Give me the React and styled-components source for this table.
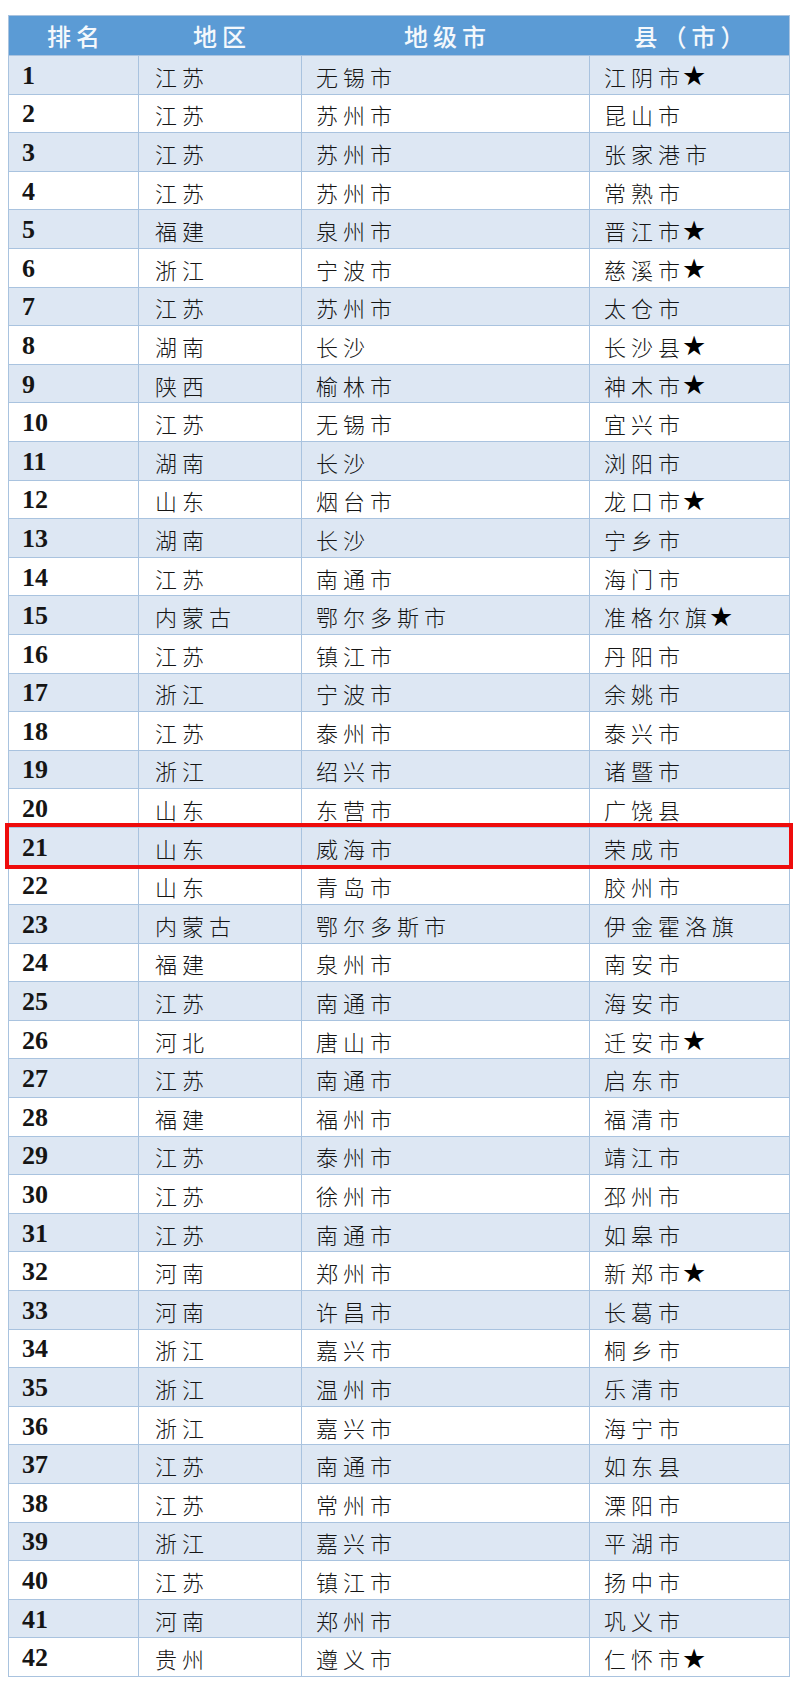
import React from "react";
import styled, { createGlobalStyle } from "styled-components";

const GlobalStyle = createGlobalStyle`
  html, body {
    margin: 0;
    padding: 0;
    background: #ffffff;
  }
`;

const rows = [
  ["江苏", "无锡市", "江阴市", true],
  ["江苏", "苏州市", "昆山市"],
  ["江苏", "苏州市", "张家港市"],
  ["江苏", "苏州市", "常熟市"],
  ["福建", "泉州市", "晋江市", true],
  ["浙江", "宁波市", "慈溪市", true],
  ["江苏", "苏州市", "太仓市"],
  ["湖南", "长沙", "长沙县", true],
  ["陕西", "榆林市", "神木市", true],
  ["江苏", "无锡市", "宜兴市"],
  ["湖南", "长沙", "浏阳市"],
  ["山东", "烟台市", "龙口市", true],
  ["湖南", "长沙", "宁乡市"],
  ["江苏", "南通市", "海门市"],
  ["内蒙古", "鄂尔多斯市", "准格尔旗", true],
  ["江苏", "镇江市", "丹阳市"],
  ["浙江", "宁波市", "余姚市"],
  ["江苏", "泰州市", "泰兴市"],
  ["浙江", "绍兴市", "诸暨市"],
  ["山东", "东营市", "广饶县"],
  ["山东", "威海市", "荣成市"],
  ["山东", "青岛市", "胶州市"],
  ["内蒙古", "鄂尔多斯市", "伊金霍洛旗"],
  ["福建", "泉州市", "南安市"],
  ["江苏", "南通市", "海安市"],
  ["河北", "唐山市", "迁安市", true],
  ["江苏", "南通市", "启东市"],
  ["福建", "福州市", "福清市"],
  ["江苏", "泰州市", "靖江市"],
  ["江苏", "徐州市", "邳州市"],
  ["江苏", "南通市", "如皋市"],
  ["河南", "郑州市", "新郑市", true],
  ["河南", "许昌市", "长葛市"],
  ["浙江", "嘉兴市", "桐乡市"],
  ["浙江", "温州市", "乐清市"],
  ["浙江", "嘉兴市", "海宁市"],
  ["江苏", "南通市", "如东县"],
  ["江苏", "常州市", "溧阳市"],
  ["浙江", "嘉兴市", "平湖市"],
  ["江苏", "镇江市", "扬中市"],
  ["河南", "郑州市", "巩义市"],
  ["贵州", "遵义市", "仁怀市", true],
];

const HIGHLIGHT = 21;

const Page = styled.div`
  padding: 15px 10px 8px 8px;
`;

const Table = styled.div`
  width: 782px;
  border: 1px solid #a9c3df;
  box-sizing: border-box;
`;

const cols = "129px 163px 288px 1fr";

const HeadRow = styled.div`
  display: grid;
  grid-template-columns: ${cols};
  height: 39px;
  background: #5b9bd5;
  color: #f4f8fc;
  font-family: "Noto Sans CJK SC", sans-serif;
  font-size: 24px;
  font-weight: 500;
  letter-spacing: 5px;
`;

const HeadCell = styled.div`
  display: flex;
  align-items: center;
  justify-content: center;
  padding-left: 5px;
`;

const Row = styled.div`
  display: grid;
  grid-template-columns: ${cols};
  height: 38.6px;
  box-sizing: border-box;
  background: ${({ $odd }) => ($odd ? "#dde7f3" : "#ffffff")};
  border-top: 1px solid #a9c3df;
  position: relative;
  ${({ $mark }) =>
    $mark &&
    `
    outline: 4px solid #ee0c0c;
    outline-offset: 0px;
    z-index: 1;
  `}
`;

const Cell = styled.div`
  display: flex;
  align-items: center;
  padding-left: ${({ $pad }) => $pad || 16}px;
  padding-top: 2px;
  border-left: ${({ $first }) => ($first ? "none" : "1px solid #a9c3df")};
  color: #151515;
  font-family: "Noto Sans CJK SC", sans-serif;
  font-size: 22px;
  font-weight: 300;
  letter-spacing: 5px;
  white-space: nowrap;
`;

const Rank = styled(Cell)`
  font-family: "Liberation Serif", "Times New Roman", serif;
  font-weight: 700;
  font-size: 26px;
  letter-spacing: 0;
  padding-left: 13px;
`;

const Star = styled.span`
  font-family: "DejaVu Sans", sans-serif;
  font-size: 27px;
  color: #000;
  margin-left: -3px;
`;

export default function App() {
  return (
    <Page>
      <GlobalStyle />
      <Table>
        <HeadRow>
          <HeadCell>排名</HeadCell>
          <HeadCell>地区</HeadCell>
          <HeadCell>地级市</HeadCell>
          <HeadCell>县（市）</HeadCell>
        </HeadRow>
        {rows.map(([region, city, county, star], i) => {
          const rank = i + 1;
          return (
            <Row key={rank} $odd={rank % 2 === 1} $mark={rank === HIGHLIGHT}>
              <Rank $first>{rank}</Rank>
              <Cell>{region}</Cell>
              <Cell $pad={14}>{city}</Cell>
              <Cell $pad={14}>
                {county}
                {star && <Star>★</Star>}
              </Cell>
            </Row>
          );
        })}
      </Table>
    </Page>
  );
}
